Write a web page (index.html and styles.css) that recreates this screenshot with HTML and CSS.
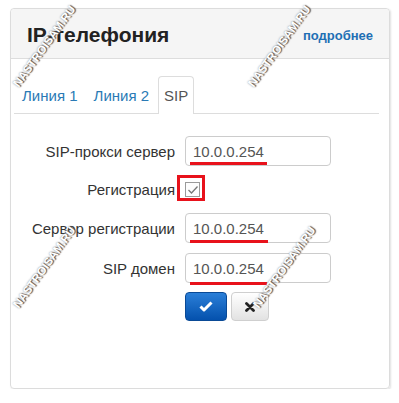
FILE: index.html
```html
<!DOCTYPE html>
<html>
<head>
<meta charset="utf-8">
<link rel="stylesheet" href="styles.css">
</head>
<body>
<div class="panel">
  <div class="panel-head">
    <h1 class="title">IP-телефония</h1>
    <a class="more" href="#">подробнее</a>
  </div>
  <div class="tabs">
    <a class="tab" href="#">Линия 1</a>
    <a class="tab" href="#">Линия 2</a>
    <span class="tab active">SIP</span>
  </div>
  <div class="form">
    <div class="row">
      <label class="lbl">SIP-прокси сервер</label>
      <div class="field"><div class="input">10.0.0.254</div><span class="mark mark1"></span></div>
    </div>
    <div class="row row-check">
      <label class="lbl">Регистрация</label>
      <div class="field">
        <span class="redbox"></span>
        <span class="check">
          <svg width="12" height="10" viewBox="0 0 12 10"><path d="M1.5 5 L4.5 8 L10.5 1.5" fill="none" stroke="#777" stroke-width="1.3"/></svg>
        </span>
      </div>
    </div>
    <div class="row">
      <label class="lbl">Сервер регистрации</label>
      <div class="field"><div class="input">10.0.0.254</div><span class="mark mark2"></span></div>
    </div>
    <div class="row">
      <label class="lbl">SIP домен</label>
      <div class="field"><div class="input">10.0.0.254</div><span class="mark mark3"></span></div>
    </div>
    <div class="row row-btns">
      <span class="lbl"></span>
      <div class="btns">
        <button class="btn btn-ok"><svg width="14" height="11" viewBox="0 0 14 11"><path d="M1.5 5.5 L5 9 L12.5 1.5" fill="none" stroke="#fff" stroke-width="3" stroke-linejoin="round"/></svg></button>
        <button class="btn btn-cancel"><svg width="10" height="10" viewBox="0 0 10 10"><path d="M1.5 1.5 L8.5 8.5 M8.5 1.5 L1.5 8.5" stroke="#222" stroke-width="2.8" stroke-linecap="round"/></svg></button>
      </div>
    </div>
  </div>
  <span class="wm wm1">NASTROISAM.RU</span>
  <span class="wm wm2">NASTROISAM.RU</span>
  <span class="wm wm3">NASTROISAM.RU</span>
  <span class="wm wm4">NASTROISAM.RU</span>
</div>
</body>
</html>
```
FILE: styles.css
```css
html, body { margin: 0; padding: 0; background: #fff; }
body { padding: 8px 9px 0 10px; font-family: "Liberation Sans", Arial, sans-serif; color: #333; }
.panel {
  position: relative;
  width: 378px;
  height: 379px;
  border: 1px solid #dcdcdc;
  border-radius: 4px;
  box-shadow: 1px 1px 2px rgba(0,0,0,0.12);
}
.panel-head {
  height: 49px;
  background: #f5f5f5;
  border-bottom: 1px solid #dddddd;
  border-radius: 4px 4px 0 0;
  display: flex;
  align-items: center;
  justify-content: space-between;
  padding: 0 16px 0 16px;
}
.title { margin: 0; font-size: 21px; font-weight: bold; color: #222; padding-top: 2px; }
.more { color: #1e6fb4; font-size: 13px; font-weight: bold; text-decoration: none; padding-top: 3px; }
.tabs {
  margin: 17px 10px 0 3px;
  display: flex;
  border-bottom: 1px solid #dddddd;
  height: 37px;
}
.tab {
  display: flex;
  align-items: center;
  padding: 0 7px;
  border: 1px solid transparent;
  border-bottom: none;
  font-size: 15px;
  color: #2a7ab5;
  text-decoration: none;
  border-radius: 4px 4px 0 0;
  height: 37px;
  box-sizing: border-box;
}
.tab.active { color: #555; border-color: #dddddd; background: #fff; height: 38px; margin-left: 1px; padding: 0 5px; }
.form { padding-top: 22px; display: flex; flex-direction: column; }
.row { display: flex; align-items: center; height: 30px; margin-bottom: 10px; }
.row-check { height: 27px; }
.row-btns { height: 29px; margin-top: -1px; }
.lbl { width: 164px; text-align: right; font-size: 15px; color: #333; padding-right: 10px; }
.field { position: relative; }
.input {
  width: 129px;
  height: 28px;
  border: 1px solid #cccccc;
  border-radius: 4px;
  padding: 0 8px 0 7px;
  font-size: 15px;
  color: #555;
  display: flex;
  align-items: center;
}
.mark { position: absolute; left: 5px; height: 3px; width: 77px; background: #e8121b; }
.mark1 { top: 26px; }
.mark2 { top: 27px; width: 78px; }
.mark3 { top: 29px; }
.check {
  display: flex;
  align-items: center;
  justify-content: center;
  width: 13px;
  height: 13px;
  border: 1px solid #9a9a9a;
  background: #fdfdfd;
}
.redbox {
  position: absolute;
  left: -8px;
  top: -7px;
  width: 22px;
  height: 20px;
  border: 3px solid #e8121b;
}
.btns { display: flex; gap: 4px; }
.btn {
  height: 29px;
  border-radius: 4px;
  display: flex;
  align-items: center;
  justify-content: center;
  padding: 0;
}
.btn-ok { width: 42px; background: linear-gradient(#2b7fd8, #0451ad); border: 1px solid #0a4a96; }
.btn-cancel { width: 38px; background: linear-gradient(#ffffff, #e2e2e2); border: 1px solid #cfcfcf; }
.wm {
  position: absolute;
  font-size: 11.5px;
  line-height: 13px;
  font-weight: bold;
  color: #fff;
  text-shadow: 1px 1px 1px #555, 0 0 2px #888;
  transform: rotate(-54deg);
  white-space: nowrap;
  font-family: "Liberation Sans", Arial, sans-serif;
}
.wm1 { left: -15px; top: 31px; }
.wm2 { left: 220px; top: 31px; }
.wm3 { left: -15px; top: 252px; }
.wm4 { left: 225px; top: 252px; }
```
